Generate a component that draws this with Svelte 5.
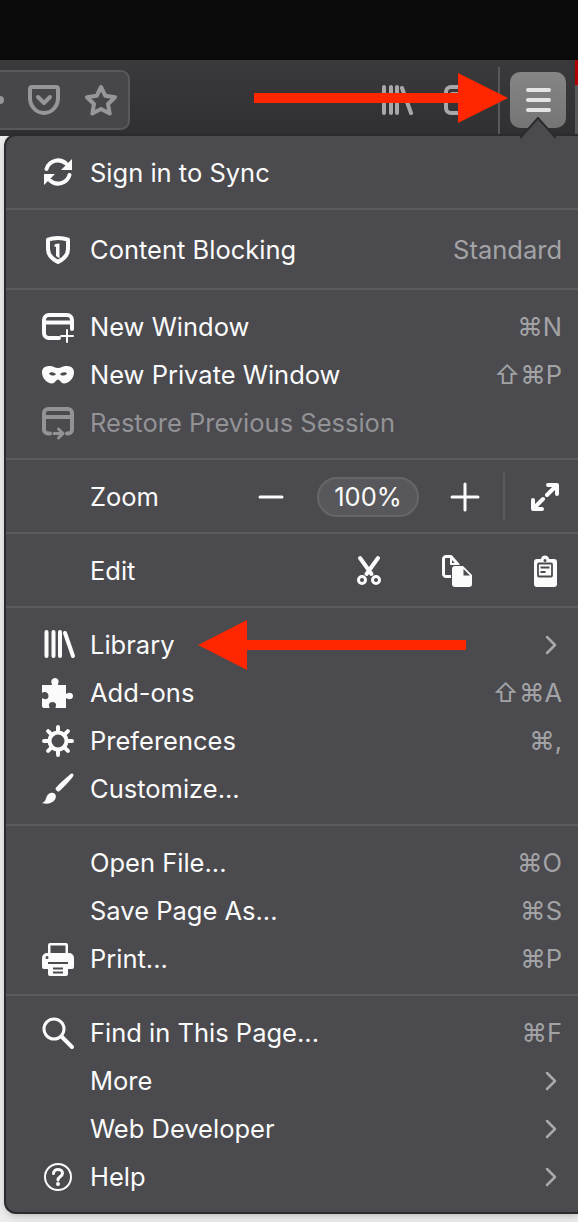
<script>
	const sections = [
		{ pad: 'a', rows: [{ icon: 'sync', label: 'Sign in to Sync' }] },
		{ pad: 'b', rows: [{ icon: 'shield', label: 'Content Blocking', hint: 'Standard' }] },
		{
			pad: 'a',
			rows: [
				{ icon: 'window', label: 'New Window', hint: '⌘N' },
				{ icon: 'mask', label: 'New Private Window', hint: '⇧⌘P' },
				{ icon: 'restore', label: 'Restore Previous Session', disabled: true },
			],
		},
		{ pad: 'a', kind: 'zoom' },
		{ pad: 'a', kind: 'edit' },
		{
			pad: 'a',
			rows: [
				{ icon: 'library', label: 'Library', more: true },
				{ icon: 'addons', label: 'Add-ons', hint: '⇧⌘A' },
				{ icon: 'gear', label: 'Preferences', hint: '⌘,' },
				{ icon: 'brush', label: 'Customize...' },
			],
		},
		{
			pad: 'a',
			rows: [
				{ label: 'Open File...', hint: '⌘O' },
				{ label: 'Save Page As...', hint: '⌘S' },
				{ icon: 'print', label: 'Print...', hint: '⌘P' },
			],
		},
		{
			pad: 'a',
			rows: [
				{ icon: 'find', label: 'Find in This Page...', hint: '⌘F' },
				{ label: 'More', more: true },
				{ label: 'Web Developer', more: true },
				{ icon: 'help', label: 'Help', more: true },
			],
		},
	];
</script>

{#snippet icon(name)}
	<svg class="ico" viewBox="0 0 32 32" width="32" height="32" aria-hidden="true">
		{#if name === 'sync'}
			<g transform="translate(0 -1)">
				<path class="s4" d="M4.500 13A12 12 0 0 1 24 7.500" />
				<path class="f" d="M30 3v11H19z" />
				<path class="s4" d="M27.500 19A12 12 0 0 1 8 24.500" />
				<path class="f" d="M2 29V18h11z" />
			</g>
		{:else if name === 'shield'}
			<path class="s4" d="M16 4c4.500 0 7.500.7 10 1.700V15c0 6-4 10-10 13-6-3-10-7-10-13V5.700C8.500 4.700 11.500 4 16 4z" />
			<path class="f" d="M17.500 9.500c-2 .1-3.500.4-5 .9V13l1.500-.5V22l3.500 2.500z" />
		{:else if name === 'window'}
			<path class="s4" d="M17 27H7a5 5 0 0 1-5-5V9a5 5 0 0 1 5-5h18a5 5 0 0 1 5 5v9M2 11.500h28" />
			<path class="s2" d="M25 19v12M19 25h12" />
		{:else if name === 'mask'}
			<path class="f" fill-rule="evenodd" d="M8 7c3 0 5 2 8 2s5-2 8-2c5 0 8 2 8 6.500C32 19 27 24.500 22 24.500c-3 0-4-4-6-4s-3 4-6 4C5 24.500 0 19 0 13.500 0 9 3 7 8 7zm-1 7.500c1.500 2.500 5.500 2.800 7 .8-1.500-2.300-5.500-2.800-7-.8zm18 0c-1.500-2-5.500-1.500-7 .8 1.500 2 5.500 1.700 7-.8z" />
		{:else if name === 'restore'}
			<path class="s4" d="M8 26.500H6a4 4 0 0 1-4-4V6a4 4 0 0 1 4-4h20a4 4 0 0 1 4 4v16.500a4 4 0 0 1-4 4h-1M2 10h28" />
			<path class="s3" d="M12 26.500h8M16.500 22l4.500 4.500-4.500 4.500" />
		{:else if name === 'library'}
			<path class="s4" d="M4.500 3v24M11.500 3v24M18 3v24M23 4l8 23" />
		{:else if name === 'addons'}
			<path class="f" d="M0 8h9.500c.5 0 .8-.5.400-1.200C8.500 5 9.500 1 13 1s4.500 4 3 5.800c-.4.700-.1 1.200.4 1.200H24v8c0 .600.600.9 1.200.5C27 15 31 15.500 31 19s-4 4-5.800 2.500c-.6-.4-1.200-.1-1.200.5V31H14c-.5 0-.8-.5-.4-1.200 1.200-1.800.2-4.800-3.100-4.800S6.200 28 7.400 29.800c.4.700.1 1.200-.4 1.200H2a2 2 0 0 1-2-2v-7c0-.6.600-.9 1.200-.5 1.800 1.200 5.300 1 5.300-2.500S3 14.300 1.200 15.500C.6 15.900 0 15.600 0 15z" />
		{:else if name === 'gear'}
			<circle class="s4" cx="16" cy="16" r="8.500" />
			<path class="s4" d="M16 2v5M16 25v5M2 16h5M25 16h5M6.100 6.100l3.500 3.500M22.400 22.400l3.500 3.500M6.100 25.900l3.500-3.500M22.400 9.600l3.500-3.500" />
		{:else if name === 'brush'}
			<path class="f" d="M31 1c1 1 .5 2-.5 3.200C27 8.500 21 15 17.500 18c-.8.700-1.600.7-2.400 0l-1-1c-.7-.8-.7-1.600 0-2.400C17 11 24 5 28 1.500 29.200.5 30.200.200 31 1z" />
			<path class="f" d="M0 30c3-1 3.500-3 4.500-6 1-3 4-5 7-4 2.500 1 3 4 1.500 6.500C11 30 5 32 0 30z" />
		{:else if name === 'print'}
			<path class="f" fill-rule="evenodd" d="M6 10V2a2 2 0 0 1 2-2h16a2 2 0 0 1 2 2v8h1a5 5 0 0 1 5 5v9a2 2 0 0 1-2 2h-4v-7H6v7H2a2 2 0 0 1-2-2v-9a5 5 0 0 1 5-5zm2.500 0h15V2.500h-15zM5 13a1.500 1.500 0 1 0 0 3 1.500 1.500 0 0 0 0-3z" />
			<path class="f" fill-rule="evenodd" d="M6 21h20v10a2 2 0 0 1-2 2H8a2 2 0 0 1-2-2zm5 3.500v2h10v-2zm0 4v2h10v-2z" />
		{:else if name === 'find'}
			<circle class="s3" cx="12" cy="12" r="10" />
			<path class="s4" d="M19.500 19.500l10.500 10.500" />
		{:else if name === 'help'}
			<circle class="s2" cx="16" cy="16" r="13" />
			<path class="s3" d="M11.500 12.500c0-2.500 2-4 4.500-4s4.500 1.500 4.500 3.800c0 3.200-4.500 3.200-4.500 6.700" />
			<circle class="f" cx="16" cy="23" r="2" />
		{/if}
	</svg>
{/snippet}

{#snippet chevron()}
	<svg class="chev" viewBox="0 0 12 20" width="12" height="20" aria-hidden="true">
		<path d="M2 2l8 8-8 8" />
	</svg>
{/snippet}

<div class="page">
	<div class="topbar"></div>
	<div class="toolbar">
		<div class="urlbar">
			<span class="dot"></span>
			<svg class="tb pocket" viewBox="0 0 32 30" width="32" height="30" aria-hidden="true">
				<path d="M4 2h24a2 2 0 0 1 2 2v9c0 8-6 15-14 15S2 21 2 13V4a2 2 0 0 1 2-2z" />
				<path d="M10 12l6 6 6-6" />
			</svg>
			<svg class="tb star" viewBox="0 0 34 32" width="34" height="32" aria-hidden="true">
				<path d="M17 3l4.300 8.800 9.700 1.400-7 6.800 1.700 9.600-8.700-4.600-8.700 4.600L10 20l-7-6.800 9.700-1.400z" />
			</svg>
		</div>
		<svg class="tb lib" viewBox="0 0 32 30" width="32" height="30" aria-hidden="true">
			<path d="M3 2v26M10 2v26M16 2v26M21 3l9 25" />
		</svg>
		<svg class="tb tabs" viewBox="0 0 32 30" width="32" height="30" aria-hidden="true">
			<rect x="2" y="2" width="28" height="26" rx="5" />
			<path d="M8 9h16" />
		</svg>
		<span class="tb-sep"></span>
		<div class="menu-btn">
			<span></span><span></span><span></span>
		</div>
		<span class="edge"></span>
	</div>

	<div class="menu">
		<svg class="notch" viewBox="0 0 36 22" width="36" height="22" aria-hidden="true">
			<path d="M0 21L18 1l18 20" />
		</svg>
		{#each sections as section}
			<section class="sec {section.pad}">
				{#if section.kind === 'zoom'}
					<div class="row">
						<span class="slot"></span>
						<span class="label">Zoom</span>
						<div class="controls zoom">
							<svg class="ico" viewBox="0 0 32 32" width="32" height="32" aria-hidden="true"><path class="s3" d="M5 16h22" /></svg>
							<span class="pill">100%</span>
							<svg class="ico" viewBox="0 0 32 32" width="32" height="32" aria-hidden="true"><path class="s3" d="M3 16h26M16 3v26" /></svg>
							<span class="vsep"></span>
							<svg class="ico" viewBox="0 0 32 32" width="32" height="32" aria-hidden="true">
								<path class="s4" d="M27 5l-9 9M5 27l9-9M19 4h9v9M4 19v9h9" />
							</svg>
						</div>
					</div>
				{:else if section.kind === 'edit'}
					<div class="row">
						<span class="slot"></span>
						<span class="label">Edit</span>
						<div class="controls edit">
							<svg class="ico" viewBox="0 0 32 32" width="32" height="32" aria-hidden="true">
								<path class="s4" d="M7 3l11.500 16M25 3L13.500 19" />
								<circle class="s3" cx="9" cy="25" r="3.500" />
								<circle class="s3" cx="23" cy="25" r="3.500" />
							</svg>
							<svg class="ico" viewBox="0 0 32 32" width="32" height="32" aria-hidden="true">
								<path class="s3" d="M10 21.500H5a2.500 2.500 0 0 1-2.500-2.500V4A2.500 2.500 0 0 1 5 1.500h5l7 8v2" />
								<path class="s2" d="M10 2v7h6" />
								<path class="f halo" fill-rule="evenodd" d="M14 11h8l9 9v9a3 3 0 0 1-3 3H14a3 3 0 0 1-3-3V14a3 3 0 0 1 3-3z" />
								<path class="fold" d="M22.500 14v6.500H29z" />
							</svg>
							<svg class="ico" viewBox="0 0 32 32" width="32" height="32" aria-hidden="true">
								<path class="f" fill-rule="evenodd" d="M12 4c0-2 2-3.500 4-3.500S20 2 20 4h5a3 3 0 0 1 3 3v22a3 3 0 0 1-3 3H8a3 3 0 0 1-3-3V7a3 3 0 0 1 3-3zm2.500 1.500a1.500 1.500 0 1 0 3 0 1.500 1.500 0 0 0-3 0z" />
								<rect class="paper" x="9" y="8.500" width="14" height="13" rx="1" />
								<path class="paper" d="M11.500 12.500h9M11.500 17h5" />
							</svg>
						</div>
					</div>
				{:else}
					{#each section.rows as row}
						<div class="row" class:disabled={row.disabled}>
							<span class="slot">
								{#if row.icon}{@render icon(row.icon)}{/if}
							</span>
							<span class="label">{row.label}</span>
							{#if row.hint}<span class="hint">{row.hint}</span>{/if}
							{#if row.more}{@render chevron()}{/if}
						</div>
					{/each}
				{/if}
			</section>
		{/each}
	</div>

	<!-- red annotation arrows drawn on top of the screenshot -->
	<svg class="arrow one" viewBox="0 0 254 50" width="254" height="50" aria-hidden="true">
		<path d="M0 20h204V0l50 25-50 25V30H0z" />
	</svg>
	<svg class="arrow two" viewBox="0 0 268 50" width="268" height="50" aria-hidden="true">
		<path d="M268 20H49V0L0 25l49 25V30h219z" />
	</svg>
</div>

<style>
	:global(body) {
		margin: 0;
		background: #f3f3f3;
	}
	.page {
		position: relative;
		width: 578px;
		height: 1222px;
		overflow: hidden;
		background: #ececec;
		font-family: Inter, 'Liberation Sans', sans-serif;
		font-size: 25.5px;
		color: #fbfbfb;
	}
	.topbar {
		height: 60px;
		background: #0a0a0a;
	}
	.toolbar {
		display: flex;
		align-items: center;
		height: 76px;
		background: linear-gradient(#3a3a3d, #303033);
	}
	.urlbar {
		display: flex;
		align-items: center;
		box-sizing: border-box;
		width: 130px;
		height: 60px;
		margin-top: 4px;
		padding-left: 28px;
		gap: 24px;
		background: #47474a;
		border: 2px solid #59595c;
		border-left: 0;
		border-radius: 0 9px 9px 0;
		position: relative;
	}
	.dot {
		position: absolute;
		left: -4px;
		width: 8px;
		height: 8px;
		border-radius: 50%;
		background: #979799;
	}
	.tb {
		fill: none;
		stroke: #979799;
		stroke-width: 4;
		stroke-linecap: round;
		stroke-linejoin: round;
	}
	.lib,
	.tabs {
		stroke: #a8a8aa;
		margin-top: 4px;
	}
	.lib {
		margin-left: 251px;
	}
	.tabs {
		margin-left: 31px;
	}
	.tb-sep {
		width: 2px;
		height: 67px;
		margin-left: 22px;
		margin-top: 5px;
		background: #59595c;
	}
	.menu-btn {
		display: flex;
		flex-direction: column;
		align-items: center;
		justify-content: center;
		gap: 6px;
		width: 56px;
		height: 56px;
		margin-left: 10px;
		margin-top: 4px;
		box-sizing: border-box;
		border-radius: 10px;
		background: linear-gradient(#858585, #757575);
	}
	.menu-btn span {
		width: 25px;
		height: 4px;
		border-radius: 2px;
		background: #e4e4e4;
	}
	.edge {
		width: 3px;
		height: 76px;
		margin-left: 9px;
		background: linear-gradient(#b00000 0 25px, #59595c 25px);
	}
	.menu {
		position: relative;
		box-sizing: border-box;
		width: 572px;
		margin-left: 6px;
		background: #4a4a4f;
		border-radius: 10px 0 0 10px;
		box-shadow: 0 0 0 2px #2b2b2e, 0 3px 8px rgba(0, 0, 0, 0.25);
	}
	.notch {
		position: absolute;
		top: -19px;
		left: 514px;
		fill: #4a4a4f;
		stroke: #2b2b2e;
		stroke-width: 2;
	}
	.sec {
		border-top: 2px solid #5b5b5f;
	}
	.sec:first-of-type {
		border-top: 0;
	}
	.sec.a {
		padding: 13px 0 11px;
	}
	.sec.b {
		padding: 16px 0 14px;
	}
	.row {
		display: flex;
		align-items: center;
		height: 48px;
		padding-right: 16px;
	}
	.row.disabled {
		color: #939396;
	}
	.slot {
		display: flex;
		flex: none;
		width: 32px;
		height: 32px;
		margin-left: 36px;
		margin-right: 16px;
	}
	.ico {
		flex: none;
		fill: none;
		stroke: currentColor;
		stroke-linecap: round;
		stroke-linejoin: round;
		overflow: visible;
	}
	.ico .f {
		fill: currentColor;
		stroke: none;
	}
	.ico .s2 {
		stroke-width: 2;
	}
	.ico .s3 {
		stroke-width: 3;
	}
	.ico .s4 {
		stroke-width: 4;
	}
	.ico .halo {
		stroke: #4a4a4f;
		stroke-width: 2;
		paint-order: stroke;
	}
	.ico .fold {
		fill: #4a4a4f;
		stroke: none;
	}
	.ico .paper {
		stroke: #4a4a4f;
		stroke-width: 1.800;
		stroke-linecap: butt;
	}
	.label {
		margin-top: -2px;
		white-space: nowrap;
	}
	.hint {
		margin-top: -2px;
		margin-left: auto;
		color: #a3a3a6;
		white-space: nowrap;
	}
	.chev {
		margin-left: auto;
		margin-right: 5px;
		fill: none;
		stroke: #a9a9ac;
		stroke-width: 2.500;
		stroke-linecap: round;
		stroke-linejoin: round;
	}
	.controls {
		display: flex;
		align-items: center;
		margin-left: auto;
		margin-right: 1px;
	}
	.zoom {
		gap: 30px;
	}
	.pill {
		box-sizing: border-box;
		width: 102px;
		height: 40px;
		line-height: 36px;
		text-align: center;
		background: #58585c;
		border: 2px solid #66666a;
		border-radius: 20px;
	}
	.vsep {
		width: 2px;
		height: 48px;
		margin: 0 -6px 0 -8px;
		background: #5b5b5f;
	}
	.edit {
		gap: 56px;
	}
	.arrow {
		position: absolute;
		fill: #ff2600;
	}
	.arrow.one {
		left: 254px;
		top: 73px;
	}
	.arrow.two {
		left: 198px;
		top: 620px;
	}
</style>
